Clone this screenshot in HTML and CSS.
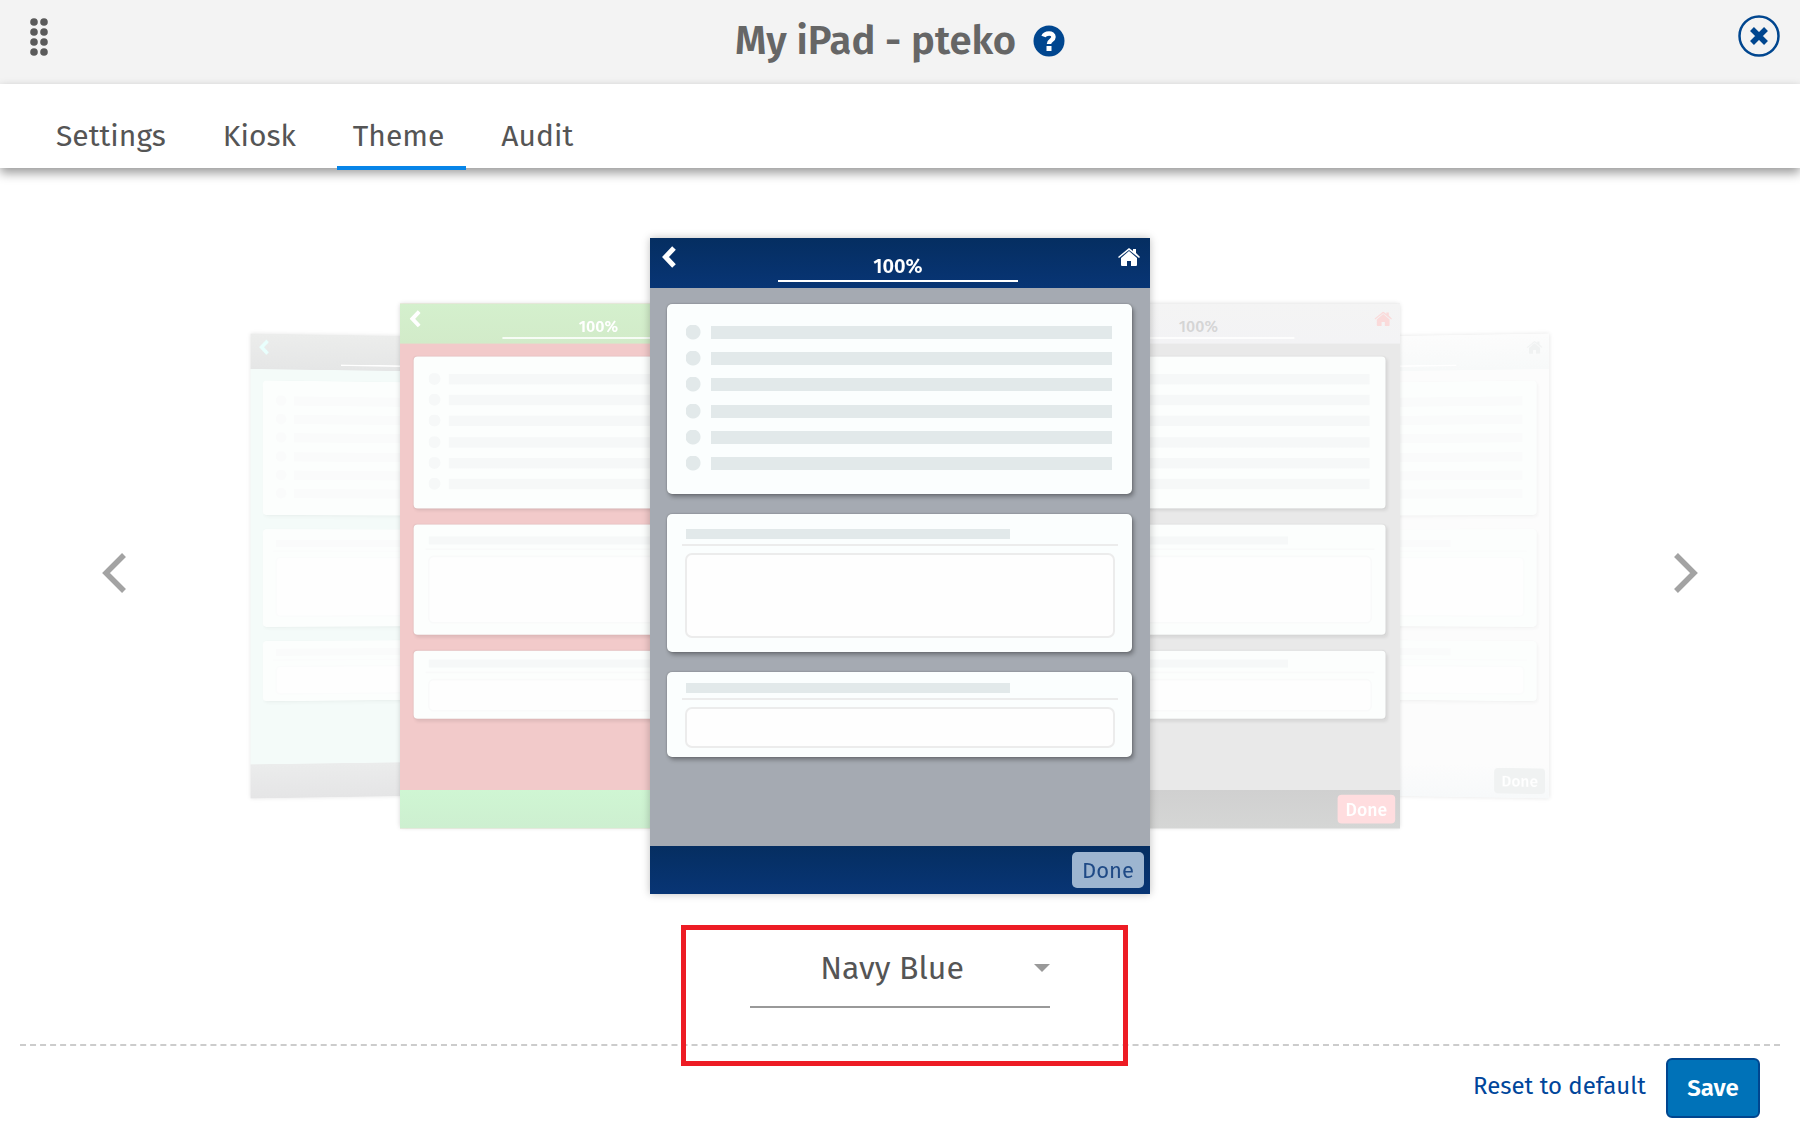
FILE: index.html
```html
<!DOCTYPE html>
<html lang="en">
<head>
<meta charset="utf-8">
<meta name="viewport" content="width=device-width, initial-scale=1">
<title>My iPad - pteko</title>
<link rel="stylesheet" href="styles.css">
</head>
<body>
<svg class="defs" aria-hidden="true">
  <symbol id="back" viewBox="0 0 14 22"><path d="M12 2 L3.500 11 L12 20" fill="none" stroke="currentColor" stroke-width="5"/></symbol>
  <symbol id="home" viewBox="0 0 22 18"><path d="M3 10 L11 3 L19 10 V17 Q19 18 18 18 H13 V13 H9 V18 H4 Q3 18 3 17 Z M0 9 L11 0 L15 3 V1 H18 V5 L22 9 L21 10 L11 2 L1 10 Z" fill="currentColor"/></symbol>
</svg>

<header class="topbar">
  <button class="grip" aria-label="Move">
    <svg width="18" height="38" viewBox="0 0 18 38" fill="#5a5a5a"><circle cx="4" cy="4" r="3.800"/><circle cx="14" cy="4" r="3.800"/><circle cx="4" cy="14" r="3.800"/><circle cx="14" cy="14" r="3.800"/><circle cx="4" cy="24" r="3.800"/><circle cx="14" cy="24" r="3.800"/><circle cx="4" cy="34" r="3.800"/><circle cx="14" cy="34" r="3.800"/></svg>
  </button>
  <div class="heading">
    <h1>My iPad - pteko</h1>
    <button class="help" aria-label="Help">
      <svg width="32" height="32" viewBox="0 0 32 32"><circle cx="16" cy="16" r="15.500" fill="#00468f"/><path d="M10.500 11.500 C12 7.500 20.500 7 20.500 12 C20.500 15.500 16 15 16 19" fill="none" stroke="#fff" stroke-width="4.500"/><rect x="13.500" y="21" width="5" height="5" fill="#fff"/></svg>
    </button>
  </div>
  <button class="close" aria-label="Close">
    <svg width="42" height="42" viewBox="0 0 42 42" fill="none" stroke="#00468f"><circle cx="21" cy="21" r="19.500" stroke-width="2.500"/><path d="M14 14 L28 28 M28 14 L14 28" stroke-width="5.500"/></svg>
  </button>
</header>

<nav class="tabs">
  <a href="#settings">Settings</a>
  <a href="#kiosk">Kiosk</a>
  <a href="#theme" class="active" aria-current="page">Theme</a>
  <a href="#audit">Audit</a>
</nav>

<main>
  <section class="carousel">
    <button class="arrow" aria-label="Previous theme"><svg width="24" height="40" viewBox="0 0 24 40"><path d="M22 2 L4 20 L22 38" fill="none" stroke="#a3a3a3" stroke-width="5.500"/></svg></button>
    <div class="stage">
      <article class="theme far-left teal">
        <div class="theme-head"><svg class="back"><use href="#back"/></svg><div class="progress"></div></div>
        <div class="theme-body">
          <div class="panel list"><i></i><i></i><i></i><i></i><i></i><i></i></div>
          <div class="panel area"><b></b><hr><div class="box"></div></div>
          <div class="panel line"><b></b><hr><div class="box"></div></div>
        </div>
        <div class="theme-foot"></div>
      </article>
      <article class="theme far-right white">
        <div class="theme-head"><div class="progress"></div><svg class="home"><use href="#home"/></svg></div>
        <div class="theme-body">
          <div class="panel list"><i></i><i></i><i></i><i></i><i></i><i></i></div>
          <div class="panel area"><b></b><hr><div class="box"></div></div>
          <div class="panel line"><b></b><hr><div class="box"></div></div>
        </div>
        <div class="theme-foot"><span class="done">Done</span></div>
      </article>
      <article class="theme near-left red">
        <div class="theme-head"><svg class="back"><use href="#back"/></svg><div class="progress">100%</div></div>
        <div class="theme-body">
          <div class="panel list"><i></i><i></i><i></i><i></i><i></i><i></i></div>
          <div class="panel area"><b></b><hr><div class="box"></div></div>
          <div class="panel line"><b></b><hr><div class="box"></div></div>
        </div>
        <div class="theme-foot"></div>
      </article>
      <article class="theme near-right gray">
        <div class="theme-head"><div class="progress">100%</div><svg class="home"><use href="#home"/></svg></div>
        <div class="theme-body">
          <div class="panel list"><i></i><i></i><i></i><i></i><i></i><i></i></div>
          <div class="panel area"><b></b><hr><div class="box"></div></div>
          <div class="panel line"><b></b><hr><div class="box"></div></div>
        </div>
        <div class="theme-foot"><span class="done">Done</span></div>
      </article>
      <article class="theme current navy">
        <div class="theme-head"><svg class="back"><use href="#back"/></svg><div class="progress">100%</div><svg class="home"><use href="#home"/></svg></div>
        <div class="theme-body">
          <div class="panel list"><i></i><i></i><i></i><i></i><i></i><i></i></div>
          <div class="panel area"><b></b><hr><div class="box"></div></div>
          <div class="panel line"><b></b><hr><div class="box"></div></div>
        </div>
        <div class="theme-foot"><span class="done">Done</span></div>
      </article>
    </div>
    <button class="arrow" aria-label="Next theme"><svg width="24" height="40" viewBox="0 0 24 40"><path d="M2 2 L20 20 L2 38" fill="none" stroke="#a3a3a3" stroke-width="5.500"/></svg></button>
  </section>
  <div class="picker">
    <select aria-label="Theme"><option>Navy Blue</option></select>
    <svg class="caret" width="16" height="8" viewBox="0 0 16 8"><path d="M0 0 H16 L8 8 Z" fill="#999"/></svg>
    <div class="highlight"></div>
  </div>
</main>

<footer class="actions">
  <a href="#reset">Reset to default</a>
  <button class="save">Save</button>
</footer>
</body>
</html>
```

FILE: styles.css
```css
* { box-sizing: border-box; }
body {
  margin: 0;
  background: #fff;
  color: #555;
  font-family: "Fira Sans", "Noto Sans", sans-serif;
  overflow-x: hidden;
}
button {
  border: 0;
  padding: 0;
  background: none;
  font-family: inherit;
  cursor: pointer;
}
svg { display: block; }
.defs { position: absolute; width: 0; height: 0; }

/* Title bar */
.topbar {
  display: grid;
  grid-template-columns: 1fr auto 1fr;
  align-items: start;
  height: 84px;
  padding: 0 20px 0 30px;
  background: #f3f3f3;
}
.grip { justify-self: start; margin-top: 18px; }
.heading { display: flex; align-items: center; gap: 17px; height: 82px; margin-right: 10px; }
h1 { margin: 0; font-size: 40px; font-weight: 600; line-height: 48px; color: #666; }
.close { justify-self: end; margin-top: 15px; }

/* Tabs */
.tabs {
  display: flex;
  gap: 19px;
  height: 84px;
  padding: 20px 40px 0;
  box-shadow: 0 5px 10px rgba(0, 0, 0, 0.4);
}
.tabs a {
  height: 66px;
  padding: 0 22px 0 16px;
  border-bottom: 4px solid transparent;
  font-size: 30px;
  line-height: 64px;
  color: #555;
  text-decoration: none;
}
.tabs .active { border-color: #0785e8; }

/* Theme carousel */
.carousel {
  display: flex;
  align-items: center;
  justify-content: space-between;
  padding: 70px 102px 0;
}
.arrow { margin-top: 14px; }
.stage { display: grid; justify-items: center; }
.theme {
  grid-area: 1 / 1;
  width: 500px;
  background: var(--body);
  box-shadow: 0 0 8px rgba(0, 0, 0, 0.25);
}
.current { z-index: 1; }
.near-left { transform: translateX(-300px) scale(0.8); }
.near-right { transform: translateX(300px) scale(0.8); }
.far-left { transform: translateX(-474px) perspective(2000px) rotateY(8deg) scale(0.7); }
.far-right { transform: translateX(474px) perspective(2000px) rotateY(-8deg) scale(0.7); }

.theme-head {
  display: grid;
  grid-template-columns: 1fr 240px 1fr;
  align-items: start;
  height: 50px;
  padding: 0 10px 0 6px;
  background: linear-gradient(var(--bar-top), var(--bar-bottom));
}
.back { width: 14px; height: 22px; margin: 8px 0 0 6px; color: var(--back); }
.home { grid-column: 3; justify-self: end; width: 22px; height: 18px; margin-top: 10px; color: var(--home); }
.progress {
  grid-column: 2;
  height: 44px;
  padding-top: 15px;
  border-bottom: 2px solid #fff;
  font-size: 20px;
  font-weight: 600;
  line-height: 26px;
  text-align: center;
  color: var(--percent);
}
.theme-body {
  display: flex;
  flex-direction: column;
  gap: 20px;
  height: 558px;
  padding: 16px 18px 0 17px;
}
.panel {
  display: flex;
  flex-direction: column;
  border-radius: 5px;
  background: #fbfefe;
  box-shadow: 2px 3px 4px var(--shadow), 0 0 2px var(--shadow);
}
.list { height: 190px; justify-content: space-between; padding: 21px 20px 23px 19px; }
.list i {
  height: 15px;
  background:
    radial-gradient(circle at 7px 7px, var(--ghost) 7px, transparent 8px) no-repeat,
    linear-gradient(var(--ghost), var(--ghost)) 25px 1px / 401px 13px no-repeat;
}
.panel b { width: 324px; height: 10px; margin-left: 4px; background: var(--ghost); }
.panel hr { width: 436px; height: 2px; margin: 5px 0 7px; border: 0; background: var(--rule); }
.area { height: 138px; padding: 15px 15px 14px; }
.line { height: 85px; padding: 11px 15px 9px; }
.box { flex: 1; width: 430px; margin-left: 3px; border: 2px solid var(--rule); border-radius: 7px; background: #fefefe; }
.theme-foot {
  display: flex;
  align-items: center;
  justify-content: flex-end;
  height: 48px;
  padding: 0 6px;
  background: linear-gradient(var(--foot-top), var(--foot-bottom));
}
.done {
  width: 72px;
  height: 36px;
  border-radius: 5px;
  background: var(--done);
  color: var(--done-text);
  font-size: 22px;
  line-height: 37px;
  text-align: center;
}

.navy {
  --bar-top: #052e61; --bar-bottom: #083575; --foot-top: #052e61; --foot-bottom: #083575;
  --body: #a5aab2; --back: #fff; --home: #fff; --percent: #fff;
  --ghost: #e2e9ea; --rule: #ececec; --shadow: rgba(0, 0, 0, 0.3);
  --done: #9db5d0; --done-text: #1f4a86;
}
.red {
  --bar-top: #d4f0cd; --bar-bottom: #d2ebc9; --foot-top: #cff6d3; --foot-bottom: #cdefd0;
  --body: #f2caca; --back: #fff; --percent: #fff;
  --ghost: #f6f8f8; --rule: #f9fafa; --shadow: rgba(0, 0, 0, 0.07);
}
.gray {
  --bar-top: #f4f4f4; --bar-bottom: #f3f3f5; --foot-top: #d0d0d0; --foot-bottom: #d5d6d5;
  --body: #e9e9e9; --home: #fadada; --percent: #d5d5d5;
  --ghost: #f6f8f8; --rule: #f9fafa; --shadow: rgba(0, 0, 0, 0.07);
  --done: #ffdddf; --done-text: #fff;
}
.teal {
  --bar-top: #ecedec; --bar-bottom: #e5e6e6; --foot-top: #ebecec; --foot-bottom: #e5e5e6;
  --body: #f4fbf9; --back: #e9fffd;
  --ghost: #fafbfb; --rule: #fbfcfc; --shadow: rgba(0, 0, 0, 0.03);
}
.white {
  --bar-top: #fcfcfc; --bar-bottom: #f7f9f9; --foot-top: #fcfcfc; --foot-bottom: #f7f9fa;
  --body: #fcfcfc; --home: #f0f2f2;
  --ghost: #fafbfb; --rule: #fbfcfc; --shadow: rgba(0, 0, 0, 0.03);
  --done: #f0f2f2; --done-text: #fff;
}
.red, .gray { box-shadow: 0 0 6px rgba(0, 0, 0, 0.18); }
.teal, .white { box-shadow: 0 0 6px rgba(0, 0, 0, 0.1); }
.gray .done, .white .done { font-weight: 500; }
.gray .progress { font-weight: 500; }
.red .panel, .gray .panel, .teal .panel, .white .panel { background: #fcfefd; }

/* Theme picker */
.picker {
  position: relative;
  width: 300px;
  height: 150px;
  margin: 0 auto;
  padding-top: 34px;
}
.picker select {
  appearance: none;
  width: 100%;
  height: 80px;
  padding: 2px 16px 0 0;
  border: 0;
  border-bottom: 2px solid #999;
  border-radius: 0;
  background: none;
  color: #555;
  font-family: inherit;
  font-size: 32px;
  text-align: center;
  text-align-last: center;
}
.caret { position: absolute; right: 0; top: 70px; pointer-events: none; }
.highlight {
  position: absolute;
  left: -69px;
  top: 31px;
  width: 447px;
  height: 141px;
  border: 5px solid #ed1c24;
  pointer-events: none;
}

/* Footer actions */
.actions {
  display: flex;
  align-items: center;
  justify-content: flex-end;
  gap: 20px;
  margin: 0 20px;
  padding: 12px 20px 10px;
  border-top: 2px dashed #ccc;
}
.actions a { font-size: 24px; line-height: 32px; padding-bottom: 4px; color: #00469b; text-decoration: none; }
.save {
  width: 94px;
  height: 60px;
  border: 2px solid #00468f;
  border-radius: 6px;
  background: #0072b8;
  color: #fff;
  font-size: 24px;
  font-weight: 600;
}
```
